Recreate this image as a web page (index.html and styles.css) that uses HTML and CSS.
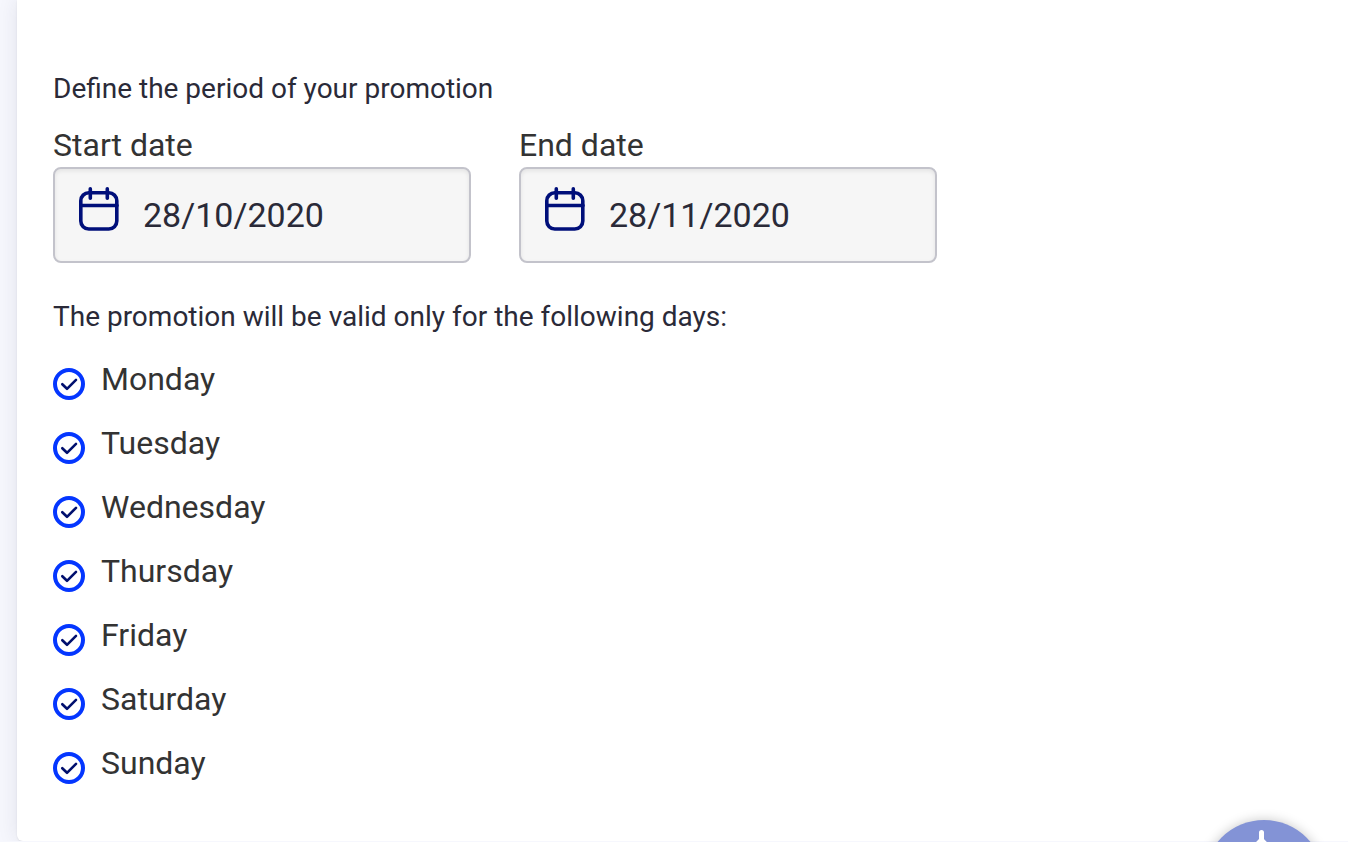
FILE: index.html
```
<!DOCTYPE html>
<html lang="en">
  <head>
    <title>Promotion period</title>
    <meta charset="utf-8" />
    <meta name="viewport" content="width=device-width, initial-scale=1.0" />
    <link rel="stylesheet" href="styles.css">
  </head>

  <body>
    <svg class="sprite" width="0" height="0" aria-hidden="true">
      <symbol id="icon-calendar" viewBox="0 0 40 44">
        <rect x="1.8" y="5.8" width="36" height="36.2" rx="8" />
        <path d="M2 18.5H38M11.3 1.8V11.2M28.3 1.8V11.2" />
      </symbol>
      <symbol id="icon-check" viewBox="0 0 32 32">
        <path d="M9.3 16.2L14 20.8L23 11.8" />
      </symbol>
    </svg>

    <main class="card">
      <form>
        <h2 class="title">Define the period of your promotion</h2>
        <div class="dates">
          <div class="field">
            <label for="startDate">Start date</label>
            <div class="date-box">
              <svg class="calendar"><use href="#icon-calendar" /></svg>
              <input id="startDate" type="text" value="28/10/2020" />
            </div>
          </div>
          <div class="field">
            <label for="endDate">End date</label>
            <div class="date-box">
              <svg class="calendar"><use href="#icon-calendar" /></svg>
              <input id="endDate" type="text" value="28/11/2020" />
            </div>
          </div>
        </div>

        <h2 class="title days-title">The promotion will be valid only for the following days:</h2>
        <div class="days">
          <label class="day">
            <span class="tick"><input type="checkbox" name="monday" checked /><svg><use href="#icon-check" /></svg></span>
            Monday
          </label>
          <label class="day">
            <span class="tick"><input type="checkbox" name="tuesday" checked /><svg><use href="#icon-check" /></svg></span>
            Tuesday
          </label>
          <label class="day">
            <span class="tick"><input type="checkbox" name="wednesday" checked /><svg><use href="#icon-check" /></svg></span>
            Wednesday
          </label>
          <label class="day">
            <span class="tick"><input type="checkbox" name="thursday" checked /><svg><use href="#icon-check" /></svg></span>
            Thursday
          </label>
          <label class="day">
            <span class="tick"><input type="checkbox" name="friday" checked /><svg><use href="#icon-check" /></svg></span>
            Friday
          </label>
          <label class="day">
            <span class="tick"><input type="checkbox" name="saturday" checked /><svg><use href="#icon-check" /></svg></span>
            Saturday
          </label>
          <label class="day">
            <span class="tick"><input type="checkbox" name="sunday" checked /><svg><use href="#icon-check" /></svg></span>
            Sunday
          </label>
        </div>
      </form>
    </main>

    <button class="fab" type="button" aria-label="Help">
      <svg viewBox="0 0 120 120"><path d="M57.500 12.500V22M57.500 20L44 34H71Z" /></svg>
    </button>
  </body>
</html>
```

FILE: styles.css
```
* {
  box-sizing: border-box;
}

body {
  margin: 0;
  background-color: #f6f7fd;
  color: #333333;
  font-family: Roboto, "Liberation Sans", sans-serif;
  font-size: 32px;
}

.sprite {
  position: absolute;
}

.card {
  margin-left: 17px;
  padding: 71px 36px 56px;
  background-color: #ffffff;
  border-bottom-left-radius: 6px;
  box-shadow: 0 1px 2px rgba(0, 0, 0, 0.08), 0 0 20px rgba(40, 40, 70, 0.1);
}

.title {
  margin: 0 0 16px;
  color: #2a2a38;
  font-size: 28px;
  font-weight: 400;
  line-height: 36px;
}

.days-title {
  margin: 36px 0 22px;
}

.dates {
  display: flex;
  gap: 48px;
}

.field {
  flex: 0 1 418px;
}

.field label {
  display: block;
  line-height: 44px;
}

.date-box {
  display: grid;
}

.date-box input,
.calendar {
  grid-area: 1 / 1;
}

.date-box input {
  width: 100%;
  height: 96px;
  margin: 0;
  padding: 0 16px 0 88px;
  border: 2px solid #c3c3cb;
  border-radius: 8px;
  background-color: #f6f6f6;
  box-shadow: inset 0 2px 4px rgba(0, 0, 0, 0.08);
  color: #2a2a38;
  font-family: inherit;
  font-size: 34px;
}

.calendar {
  z-index: 1;
  width: 40px;
  height: 44px;
  margin: 20px 0 0 26px;
  fill: none;
  stroke: #000f7a;
  stroke-width: 3.6;
  stroke-linecap: round;
  pointer-events: none;
}

.days {
  display: flex;
  flex-direction: column;
  align-items: flex-start;
  gap: 20px;
}

.day {
  display: flex;
  align-items: flex-end;
  gap: 16px;
  line-height: 44px;
}

.tick {
  display: grid;
  width: 32px;
  height: 32px;
  margin-bottom: 1px;
}

.tick input,
.tick svg {
  grid-area: 1 / 1;
  width: 32px;
  height: 32px;
  margin: 0;
}

.tick input {
  appearance: none;
  border: 4px solid #0436ff;
  border-radius: 50%;
}

.tick svg {
  visibility: hidden;
  fill: none;
  stroke: #000f6e;
  stroke-width: 2.6;
  stroke-linecap: round;
  stroke-linejoin: round;
  pointer-events: none;
}

.tick input:checked + svg {
  visibility: visible;
}

/* floating button, mostly tucked below the fold */
.fab {
  position: fixed;
  right: 24px;
  bottom: -98px;
  width: 120px;
  height: 120px;
  padding: 0;
  border: 0;
  border-radius: 50%;
  background-color: #8393d6;
  box-shadow: 0 0 12px rgba(0, 0, 0, 0.22);
}

.fab svg {
  display: block;
  fill: #ffffff;
  stroke: #ffffff;
  stroke-width: 5;
  stroke-linecap: round;
}
```
